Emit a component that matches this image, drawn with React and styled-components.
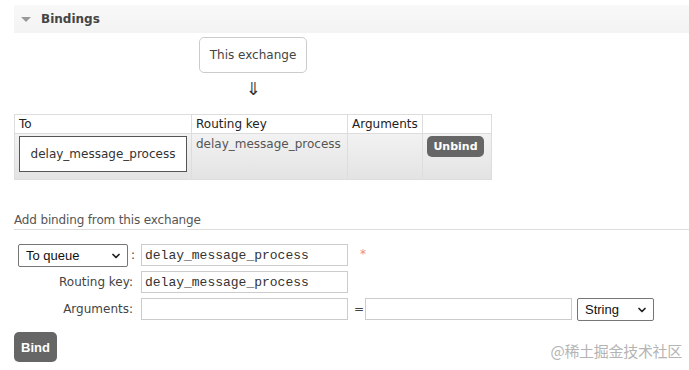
import React from 'react';
import styled, { createGlobalStyle } from 'styled-components';
import { ChevronDown } from 'lucide-react';

const GlobalStyle = createGlobalStyle`
  body {
    margin: 0;
    background: #fff;
    font-family: "DejaVu Sans", Verdana, sans-serif;
    color: #444;
  }
`;

const Page = styled.div`
  position: relative;
  width: 689px;
  height: 370px;
  overflow: hidden;
  padding: 5px 0 0 14px;
  box-sizing: border-box;
`;

const SectionHeader = styled.h2`
  margin: 0;
  height: 28px;
  display: flex;
  align-items: center;
  gap: 10px;
  padding-left: 7px;
  background: linear-gradient(to bottom, #f8f8f8, #f3f3f3);
  font-size: 12px;
  font-weight: bold;
  color: #444;
`;

const Triangle = styled.span`
  width: 0;
  height: 0;
  border-left: 5px solid transparent;
  border-right: 5px solid transparent;
  border-top: 5px solid #999;
  margin-top: 1px;
`;

const BindingsBlock = styled.div`
  display: inline-flex;
  flex-direction: column;
  align-items: center;
  margin-top: 4px;
`;

const ExchangeBox = styled.div`
  width: 108px;
  height: 36px;
  box-sizing: border-box;
  border: 1px solid #ccc;
  border-radius: 5px;
  display: flex;
  align-items: center;
  justify-content: center;
  font-size: 12px;
  color: #444;
`;

const Arrow = styled.div`
  font-size: 18px;
  line-height: 24px;
  margin: 4px 0 13px;
  color: #333;
`;

const Table = styled.table`
  border-collapse: collapse;
  font-size: 12px;
`;

const HeadCell = styled.th`
  border: 1px solid #ddd;
  text-align: left;
  font-weight: normal;
  color: #222;
  height: 19px;
  padding: 0 4px;
  width: ${p => p.$w}px;
  box-sizing: border-box;
`;

const BodyRow = styled.tr`
  background: linear-gradient(to bottom, #f2f2f2, #e3e3e3);
`;

const Cell = styled.td`
  border: 1px solid #ddd;
  border-top-color: #e8e8e8;
  vertical-align: top;
  padding: ${p => (p.$pad ? p.$pad : '4px 4px')};
  color: #555;
  height: 46px;
  box-sizing: border-box;
`;

const QueueBox = styled.div`
  width: 168px;
  height: 36px;
  box-sizing: border-box;
  border: 1px solid #555;
  background: #fff;
  display: flex;
  align-items: center;
  justify-content: center;
  color: #333;
`;

const SmallButton = styled.button`
  border: none;
  background: #666;
  color: #fff;
  font-family: "DejaVu Sans", Verdana, sans-serif;
  font-weight: bold;
  font-size: ${p => p.$size || 11}px;
  border-radius: 5px;
  padding: 0;
  width: ${p => p.$w}px;
  height: ${p => p.$h}px;
  display: block;
`;

const SubHeading = styled.h3`
  margin: 33px 0 0 0;
  font-size: 12px;
  font-weight: normal;
  color: #555;
  letter-spacing: -0.15px;
  padding-bottom: 2px;
  border-bottom: 1px solid #ddd;
`;

const Form = styled.div`
  display: grid;
  grid-template-columns: 123px 207px 17px 207px 82px;
  grid-auto-rows: 22px;
  row-gap: 5px;
  margin: 14px 0 0 4px;
  align-items: center;
`;

const Label = styled.label`
  text-align: right;
  font-size: 12px;
  color: #444;
  padding-right: 8px;
  white-space: nowrap;
`;

const SelectLabel = styled.div`
  display: flex;
  align-items: center;
  gap: 3px;
  font-size: 12px;
  color: #444;
`;

const SelectWrap = styled.div`
  position: relative;
  width: ${p => p.$w}px;
  height: 23px;
  margin-left: ${p => p.$ml || 0}px;
`;

const Select = styled.select`
  appearance: none;
  width: 100%;
  height: 100%;
  box-sizing: border-box;
  border: 1px solid #767676;
  border-radius: 2px;
  background: #fff;
  font-family: "Liberation Sans", Arial, sans-serif;
  font-size: 13px;
  color: #111;
  padding: 0 0 0 7px;
`;

const Chevron = styled(ChevronDown)`
  position: absolute;
  right: 6px;
  top: 6px;
  pointer-events: none;
`;

const Input = styled.input`
  width: 207px;
  height: 22px;
  box-sizing: border-box;
  border: 1px solid #ccc;
  padding: 0 3px;
  font-family: "Liberation Mono", "Courier New", monospace;
  font-size: 13px;
  color: #333;
  margin: 0;
`;

const Required = styled.span`
  color: #e88;
  font-size: 12px;
  padding-left: 12px;
  align-self: start;
  margin-top: 3px;
`;

const Equals = styled.span`
  font-size: 12px;
  color: #444;
  padding-left: 6px;
`;

const BindButton = styled(SmallButton)`
  margin-top: 12px;
  font-family: "Liberation Sans", Arial, sans-serif;
`;

const Watermark = styled.div`
  position: absolute;
  right: 7px;
  top: 340px;
  font-family: "Noto Sans CJK SC", sans-serif;
  font-size: 15px;
  color: #b4b4b4;
  letter-spacing: -0.3px;
`;

export default function App() {
  return (
    <Page>
      <GlobalStyle />
      <SectionHeader>
        <Triangle />
        Bindings
      </SectionHeader>
      <BindingsBlock>
        <ExchangeBox>This exchange</ExchangeBox>
        <Arrow>⇓</Arrow>
        <Table>
          <thead>
            <tr>
              <HeadCell $w={177}>To</HeadCell>
              <HeadCell $w={156}>Routing key</HeadCell>
              <HeadCell $w={75}>Arguments</HeadCell>
              <HeadCell $w={69}></HeadCell>
            </tr>
          </thead>
          <tbody>
            <BodyRow>
              <Cell $pad="2px 4px">
                <QueueBox>delay_message_process</QueueBox>
              </Cell>
              <Cell $pad="3px 4px">delay_message_process</Cell>
              <Cell />
              <Cell $pad="2px 4px">
                <SmallButton $w={57} $h={21}>Unbind</SmallButton>
              </Cell>
            </BodyRow>
          </tbody>
        </Table>
      </BindingsBlock>

      <SubHeading>Add binding from this exchange</SubHeading>

      <Form>
        <SelectLabel>
          <SelectWrap $w={110}>
            <Select defaultValue="queue">
              <option value="queue">To queue</option>
              <option value="exchange">To exchange</option>
            </Select>
            <Chevron size={12} strokeWidth={3.5} color="#222" />
          </SelectWrap>
          :
        </SelectLabel>
        <Input defaultValue="delay_message_process" />
        <Required>*</Required>
        <span />
        <span />

        <Label>Routing key:</Label>
        <Input defaultValue="delay_message_process" />
        <span />
        <span />
        <span />

        <Label>Arguments:</Label>
        <Input />
        <Equals>=</Equals>
        <Input />
        <SelectWrap $w={77} $ml={5}>
          <Select defaultValue="string">
            <option value="string">String</option>
            <option value="number">Number</option>
          </Select>
          <Chevron size={12} strokeWidth={3.5} color="#222" />
        </SelectWrap>
      </Form>

      <BindButton $w={43} $h={30} $size={13}>Bind</BindButton>

      <Watermark>@稀土掘金技术社区</Watermark>
    </Page>
  );
}
